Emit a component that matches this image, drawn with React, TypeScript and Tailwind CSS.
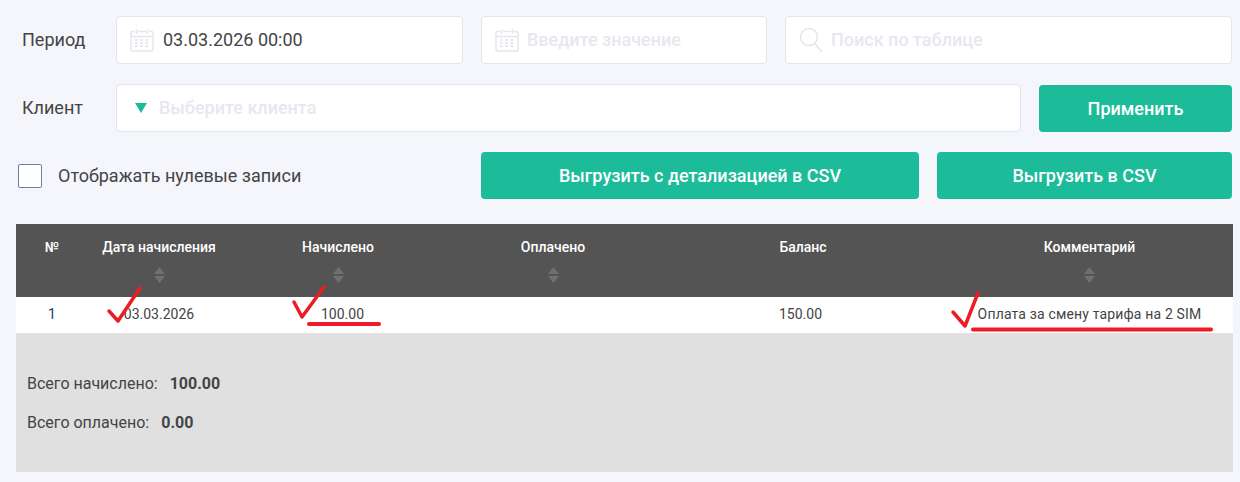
import type { ReactNode } from 'react';

function CalendarIcon() {
  return (
    <svg width="24" height="24" viewBox="0 0 24 24" fill="none" stroke="#e4e6ee" strokeWidth="1.4" className="shrink-0">
      <path d="M5 3.500H2.500a1.500 1.500 0 0 0-1.500 1.500v16a2 2 0 0 0 2 2h18a2 2 0 0 0 2-2V5a1.500 1.500 0 0 0-1.500-1.500H19" />
      <path d="M8 3.500h8M6.500 1v5M17.500 1v5M1 8.500h22" />
      <path
        d="M5 12h2.500M10.300 12h2.500M15.600 12h2.500M5 15h2.500M10.300 15h2.500M15.600 15h2.500M5 18h2.500M10.300 18h2.500M15.600 18h2.500"
        strokeWidth="2"
      />
    </svg>
  );
}

function SearchIcon() {
  return (
    <svg width="24" height="26" viewBox="0 0 24 26" fill="none" stroke="#e4e6ee" strokeWidth="1.500" className="shrink-0">
      <circle cx="10" cy="10" r="8.500" />
      <path d="M16 17l7 8" />
    </svg>
  );
}

function SortIcon() {
  return (
    <svg width="11" height="16" viewBox="0 0 11 16" className="mx-auto mt-[9px]" fill="#707070">
      <path d="M5.500 0L11 7H0z" />
      <path d="M0 9h11l-5.500 7z" />
    </svg>
  );
}

function Field({ className, children }: { className: string; children: ReactNode }) {
  return (
    <div className={`flex h-12 items-center rounded border border-[#e3e5ef] bg-white ${className}`}>{children}</div>
  );
}

function Btn({ className, children }: { className: string; children: ReactNode }) {
  return (
    <button className={`h-[47px] rounded bg-[#1cbc9b] text-[18px] font-medium text-white ${className}`}>{children}</button>
  );
}

const placeholder = 'pb-[2px] text-[18px] font-medium text-[#e6e8ef]';
const cols = 'grid grid-cols-[72px_142px_216px_214px_286px_1fr]';

export default function App() {
  return (
    <div className="relative h-[482px] w-[1240px] overflow-hidden bg-[#f5f6fb] font-['Roboto',sans-serif] text-[#444444]">
      <div className="pl-[16px] pr-[8px] pt-[16px]">
        <div className="flex items-center">
          <div className="w-[100px] pb-[2px] pl-[6px] text-[18px]">Период</div>
          <Field className="w-[347px] pl-[13px]">
            <CalendarIcon />
            <span className="ml-[9px] pb-[2px] text-[18px]">03.03.2026 00:00</span>
          </Field>
          <Field className="ml-[18px] w-[286px] pl-[13px]">
            <CalendarIcon />
            <span className={`ml-[8px] ${placeholder}`}>Введите значение</span>
          </Field>
          <Field className="ml-[18px] w-[447px] pl-[13px]">
            <SearchIcon />
            <span className={`ml-[8px] ${placeholder}`}>Поиск по таблице</span>
          </Field>
        </div>

        <div className="mt-[20px] flex items-center">
          <div className="w-[100px] pb-[2px] pl-[6px] text-[18px]">Клиент</div>
          <Field className="w-[905px] pl-[18px]">
            <span className="h-0 w-0 border-x-[6px] border-t-[10px] border-x-transparent border-t-[#1cbc9b]" />
            <span className={`ml-[12px] ${placeholder}`}>Выберите клиента</span>
          </Field>
          <Btn className="ml-[18px] w-[193px]">Применить</Btn>
        </div>

        <div className="mt-[20px] flex items-center">
          <div className="ml-[2px] h-6 w-6 rounded-[2px] border border-[#6b7fa3] bg-white" />
          <div className="ml-[16px] w-[423px] text-[18px]">Отображать нулевые записи</div>
          <Btn className="w-[438px]">Выгрузить с детализацией в CSV</Btn>
          <Btn className="ml-[18px] w-[295px]">Выгрузить в CSV</Btn>
        </div>

        <div className="mt-[25px] w-[1217px] text-[14px]">
          <div className={`${cols} h-[73px] bg-[#545454] pt-[13px] text-center font-medium text-white`}>
            <div>№</div>
            <div>
              Дата начисления
              <SortIcon />
            </div>
            <div>
              Начислено
              <SortIcon />
            </div>
            <div>
              Оплачено
              <SortIcon />
            </div>
            <div>Баланс</div>
            <div>
              Комментарий
              <SortIcon />
            </div>
          </div>

          <div className={`${cols} h-[36px] items-center bg-white pb-[2px]`}>
            <div className="text-center text-[#1f3a6e]">1</div>
            <div className="text-center">03.03.2026</div>
            <div className="pl-[91px]">100.00</div>
            <div />
            <div className="pl-[119px]">150.00</div>
            <div className="text-center tracking-[0.16px]">Оплата за смену тарифа на 2 SIM</div>
          </div>

          <div className="h-[139px] bg-[#e0e0e0] pl-[11px] pt-[40px] text-[16px]">
            <div className="flex h-[22px] items-center">
              Всего начислено:
              <b className="ml-[12px] font-bold">100.00</b>
            </div>
            <div className="mt-[17px] flex h-[22px] items-center">
              Всего оплачено:
              <b className="ml-[12px] font-bold">0.00</b>
            </div>
          </div>
        </div>
      </div>

      {/* red marker strokes drawn over the screenshot */}
      <svg width="1240" height="482" className="absolute inset-0" fill="none" stroke="#ed1c24" strokeLinecap="round" strokeLinejoin="round">
        <path d="M109 311l9 10 22-33" strokeWidth="3.500" />
        <path d="M294 302l8 15 22-30" strokeWidth="3.500" />
        <path d="M309 324h70" strokeWidth="4" />
        <path d="M953 312l12 14 13-33" strokeWidth="3.500" />
        <path d="M973 329.500h238" strokeWidth="4" />
      </svg>
    </div>
  );
}
